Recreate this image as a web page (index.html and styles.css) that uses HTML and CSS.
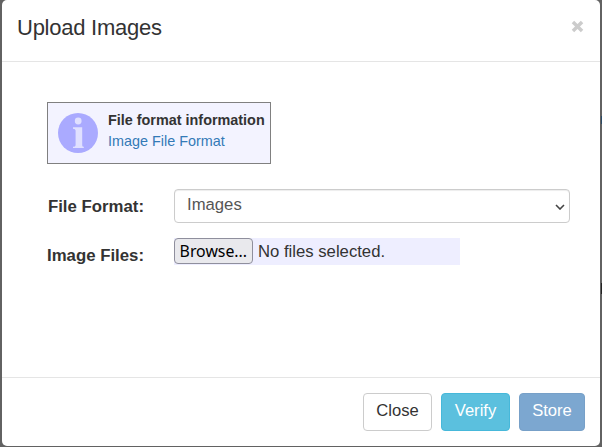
FILE: index.html
```html
<!DOCTYPE html>
<html lang="en">
<head>
<meta charset="utf-8">
<title>Upload Images</title>
<link rel="stylesheet" href="styles.css">
</head>
<body>
<div class="modal">
  <header class="header">
    <h1 class="title">Upload Images</h1>
    <svg class="dismiss" viewBox="0 0 12 12"><path d="M1.8 1.8l8.4 8.4M10.2 1.8l-8.4 8.4"/></svg>
  </header>
  <main class="body">
    <section class="info">
      <svg class="info-icon" viewBox="0 0 40 40"><circle cx="20" cy="20" r="20" fill="#aaf"/><g fill="#e0e0ff"><circle cx="20.2" cy="8" r="3.4"/><path d="M15 14.2H24.2V32.2q0 1.5 1.6 1.5V35H15v-1.3q2.6 0 2.6-1.5V17.5q0-1.8-2.6-1.8z"/></g></svg>
      <div class="info-text"><strong>File format information</strong><a>Image File Format</a></div>
    </section>
    <div class="row">
      <label class="label">File Format:</label>
      <div class="select"><span>Images</span><svg class="chevron" viewBox="0 0 10 6"><path d="M1 1l4 4 4-4"/></svg></div>
    </div>
    <div class="row row-file">
      <label class="label">Image Files:</label>
      <div class="file"><button class="browse"><span>Browse...</span></button><span class="none">No files selected.</span></div>
    </div>
  </main>
  <footer class="footer">
    <button class="btn close">Close</button>
    <button class="btn verify">Verify</button>
    <button class="btn store">Store</button>
  </footer>
</div>
</body>
</html>
```
FILE: styles.css
```css
* { box-sizing: border-box; }
body { margin: 0; padding: 0 2px 1px; height: 447px; overflow: hidden; background: linear-gradient(#222, #222) 601px 283px / 1px 11px no-repeat, linear-gradient(#2b4a66, #2b4a66) 601px 116px / 1px 8px no-repeat, #626262; font: 16.7px/22px "Liberation Sans", Arial, sans-serif; color: #333; }
.modal { height: 446px; width: 598px; background: #fff; border-radius: 5px; display: flex; flex-direction: column; }
.header { height: 62px; flex: none; border-bottom: 1px solid #e5e5e5; padding: 12px 16px 0 15px; display: flex; justify-content: space-between; }
.title { margin: 0; font-size: 22px; line-height: 31px; font-weight: 400; letter-spacing: -.25px; }
.dismiss { width: 13px; height: 13px; margin-top: 8px; stroke: #ccc; stroke-width: 3.2; fill: none; }
.body { flex: 1; padding: 40px 30px 0 45px; }
.info { width: 224px; height: 62px; border: 1px solid #808080; background: #f3f3ff; display: flex; padding: 7px 0 0 10px; font-size: 14.4px; line-height: 21px; }
.info-icon { width: 40px; height: 40px; margin-top: 3px; flex: none; }
.info-text { margin-left: 10px; display: flex; flex-direction: column; white-space: nowrap; }
.info a { color: #337ab7; }
.row { display: flex; margin-top: 25px; }
.row-file { margin-top: 15px; }
.label { width: 127px; height: 29px; padding: 7px 30px 0 0; text-align: right; font-weight: 700; white-space: nowrap; font-size: 16.8px; }
.select { width: 396px; height: 34px; border: 1px solid #ccc; border-radius: 4px; box-shadow: inset 0 1px 1px rgba(0,0,0,.075); color: #555; display: flex; justify-content: space-between; padding: 4px 4px 0 12px; }
.chevron { width: 10px; height: 6px; margin-top: 10px; fill: none; stroke: #444; stroke-width: 1.6; }
.file { width: 286px; height: 27px; background: #eef; display: flex; }
.browse { width: 79px; height: 26px; padding: 0; border: 1px solid #8f8f9d; border-radius: 4px; background: #e9e9ed; font: 16.6px/24px "Noto Sans", sans-serif; color: #000; white-space: nowrap; display: flex; justify-content: center; }
.browse span { transform: scaleX(.955); }
.none { margin: 3px 0 0 5px; }
.footer { height: 69px; border-top: 1px solid #e5e5e5; padding: 15px 15px 0; display: flex; justify-content: flex-end; gap: 9px; }
.btn { height: 38px; padding: 0 0 3px; border: 1px solid; border-radius: 4px; font: 16.6px/22px "Liberation Sans", Arial, sans-serif; color: #fff; }
.close { width: 69px; background: #fff; border-color: #ccc; color: #333; }
.verify { width: 69px; background: #5bc0de; border-color: #46b8da; }
.store { width: 66px; background: #7ca7d0; border-color: #77a0c8; }
```
